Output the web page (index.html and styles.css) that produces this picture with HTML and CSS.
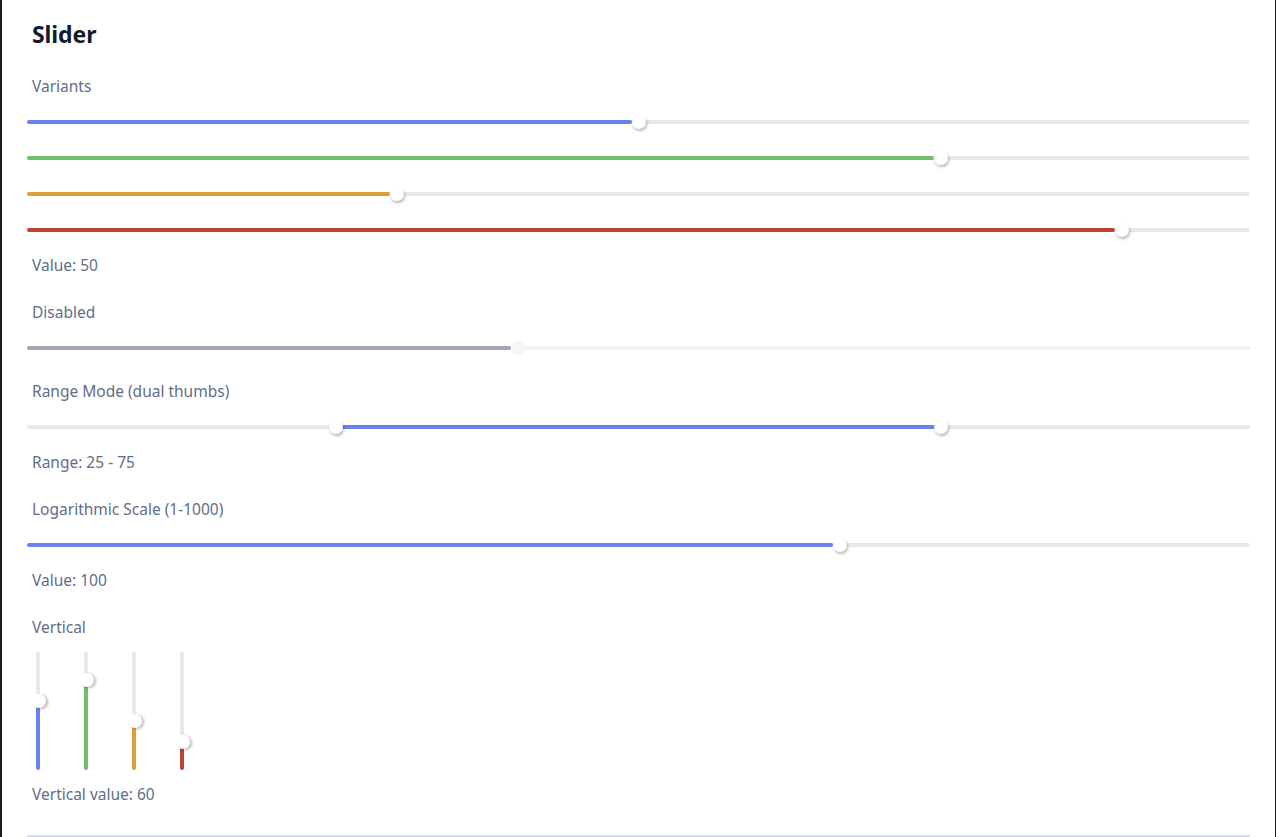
FILE: index.html
```html
<!DOCTYPE html>
<html lang="en">
<head>
<meta charset="utf-8">
<title>Slider</title>
<link rel="stylesheet" href="styles.css">
</head>
<body>
<div class="frame">
  <main class="panel">
    <h1 class="title">Slider</h1>

    <section class="section">
      <div class="label">Variants</div>
      <div class="slider" style="--p:0.5"><div class="track"></div><div class="fill blue"></div><div class="thumb"></div></div>
      <div class="slider" style="--p:0.75"><div class="track"></div><div class="fill green"></div><div class="thumb"></div></div>
      <div class="slider" style="--p:0.3"><div class="track"></div><div class="fill orange"></div><div class="thumb"></div></div>
      <div class="slider" style="--p:0.9"><div class="track"></div><div class="fill red"></div><div class="thumb"></div></div>
      <div class="value">Value: 50</div>
    </section>

    <section class="section">
      <div class="label">Disabled</div>
      <div class="slider disabled" style="--p:0.4"><div class="track"></div><div class="fill"></div><div class="thumb"></div></div>
    </section>

    <section class="section">
      <div class="label">Range Mode (dual thumbs)</div>
      <div class="slider range" style="--a:0.25; --b:0.75"><div class="track"></div><div class="fill blue"></div><div class="thumb thumb-a"></div><div class="thumb thumb-b"></div></div>
      <div class="value">Range: 25 - 75</div>
    </section>

    <section class="section">
      <div class="label">Logarithmic Scale (1-1000)</div>
      <div class="slider" style="--p:0.6667"><div class="track"></div><div class="fill blue"></div><div class="thumb"></div></div>
      <div class="value">Value: 100</div>
    </section>

    <section class="section">
      <div class="label">Vertical</div>
      <div class="vgroup">
        <div class="vslider" style="--p:0.6"><div class="vtrack"></div><div class="vfill blue"></div><div class="vthumb"></div></div>
        <div class="vslider" style="--p:0.8"><div class="vtrack"></div><div class="vfill green"></div><div class="vthumb"></div></div>
        <div class="vslider" style="--p:0.4"><div class="vtrack"></div><div class="vfill orange"></div><div class="vthumb"></div></div>
        <div class="vslider" style="--p:0.2"><div class="vtrack"></div><div class="vfill red"></div><div class="vthumb"></div></div>
      </div>
      <div class="value">Vertical value: 60</div>
    </section>
  </main>
</div>
</body>
</html>
```
FILE: styles.css
```css
* { box-sizing: border-box; }
html, body {
  margin: 0;
  padding: 0;
  background: #ffffff;
}
body {
  font-family: "Noto Sans", "Open Sans", "Liberation Sans", sans-serif;
  color: #616c87;
}
.frame {
  width: 1276px;
  height: 837px;
  border-left: 2px solid #1b1d22;
  border-right: 1px solid #1b1d22;
  overflow: hidden;
  background: #fff;
}
.panel {
  margin: 0 25px 0 25px;
  padding-top: 19px;
  height: 837px;
  border-bottom: 2px solid #dcdcf0;
}
.title {
  margin: 0 0 26px 5px;
  font-size: 23px;
  line-height: 30px;
  font-weight: 700;
  color: #141a2e;
  letter-spacing: -0.1px;
}
.section {
  margin-bottom: 14px;
}
.label, .value {
  margin-left: 5px;
  font-size: 15.5px;
  line-height: 22px;
  color: #626d88;
}
.label { margin-bottom: 7px; }
.value { margin-top: 6px; margin-bottom: 25px; }
.section:last-child .value { margin-bottom: 0; }

.slider {
  position: relative;
  height: 36px;
}
.track {
  position: absolute;
  left: 0; right: 0;
  top: 16px;
  height: 4px;
  border-radius: 2px;
  background: #e6e8ef;
}
.fill {
  position: absolute;
  left: 0;
  top: 16px;
  height: 4px;
  border-radius: 2px;
  width: calc((100% - 14px) * var(--p));
}
.thumb {
  position: absolute;
  top: 11px;
  left: calc((100% - 14px) * var(--p));
  width: 14px;
  height: 14px;
  border-radius: 50%;
  background: #ffffff;
  box-shadow: 1px 2px 3px rgba(0, 0, 0, 0.28);
}
.blue { background: #6a83ec; }
.green { background: #72bf6a; }
.orange { background: #daa136; }
.red { background: #bb4330; }

.disabled .track { background: #f1f2f6; }
.disabled .fill { background: #a1a6b4; }
.disabled .thumb { background: #f5f6fa; box-shadow: none; }

.range .fill {
  left: calc(7px + (100% - 14px) * var(--a));
  width: calc((100% - 14px) * (var(--b) - var(--a)));
}
.range .thumb-a { left: calc((100% - 14px) * var(--a)); }
.range .thumb-b { left: calc((100% - 14px) * var(--b)); }

.vgroup {
  display: flex;
  gap: 26px;
  padding-top: 7px;
}
.vslider {
  position: relative;
  width: 22px;
  height: 118px;
}
.vtrack {
  position: absolute;
  left: 9px;
  top: 0; bottom: 0;
  width: 4px;
  border-radius: 2px;
  background: #e6e8ef;
}
.vfill {
  position: absolute;
  left: 9px;
  bottom: 0;
  width: 4px;
  border-radius: 2px;
  height: calc(7px + (100% - 14px) * var(--p));
}
.vthumb {
  position: absolute;
  left: 5px;
  bottom: calc((100% - 14px) * var(--p));
  width: 14px;
  height: 14px;
  border-radius: 50%;
  background: #ffffff;
  box-shadow: 2px 1px 3px rgba(0, 0, 0, 0.28);
}
.vgroup + .value { margin-top: 13px; }
```
